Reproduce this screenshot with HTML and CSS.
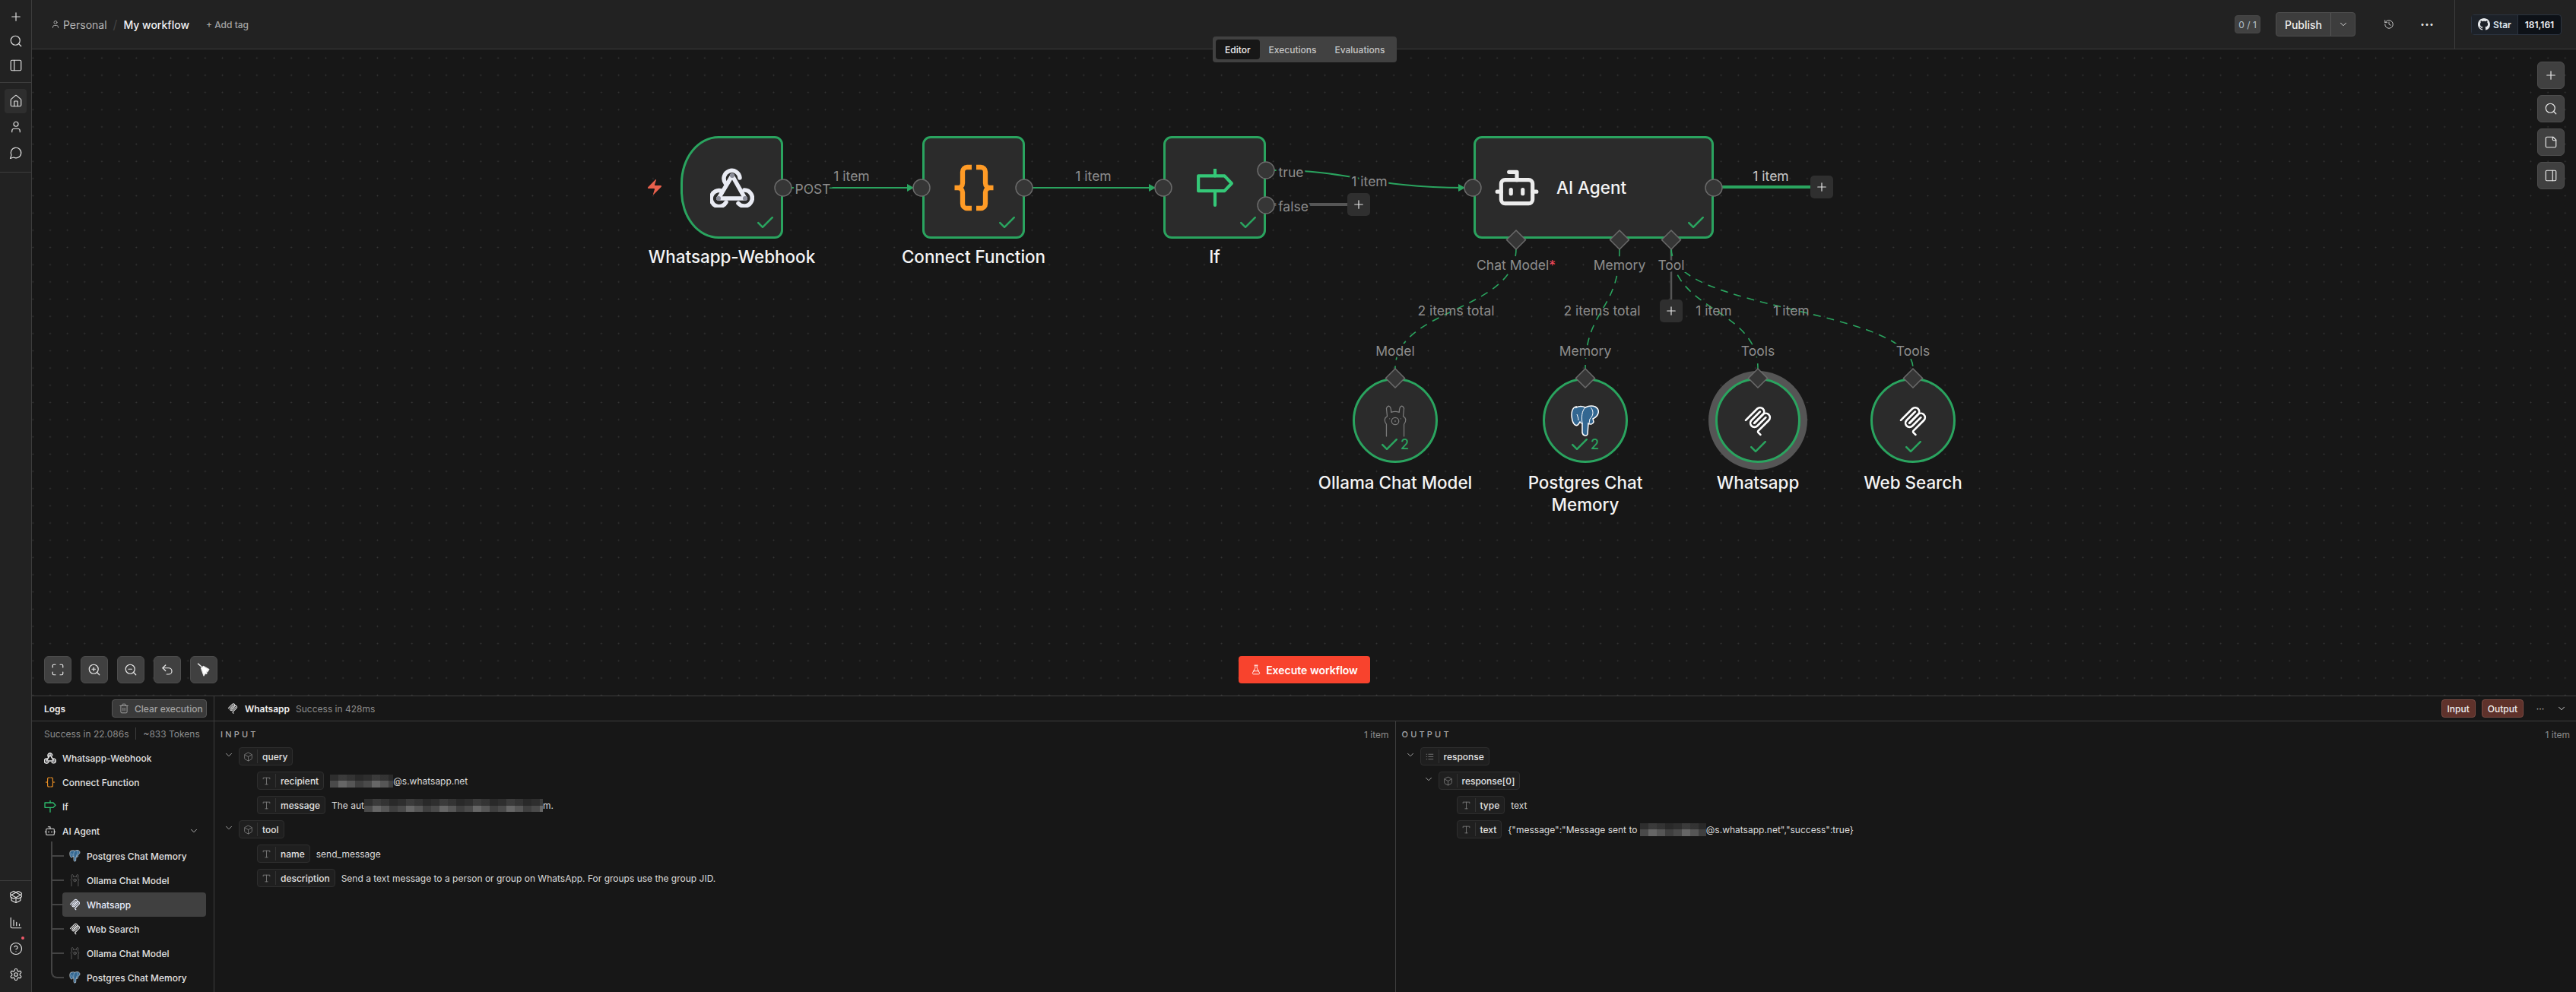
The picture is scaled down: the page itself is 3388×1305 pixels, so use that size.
FILE: index.html
```html
<!DOCTYPE html>
<html lang="en">
<head>
  <meta charset="UTF-8">
  <title>My workflow</title>
  <link rel="stylesheet" href="styles.css">
</head>
<body>
  <!-- icon sprite -->
  <svg class="sprite" xmlns="http://www.w3.org/2000/svg">
    <symbol id="i-plus" viewBox="0 0 24 24"><path d="M5 12h14M12 5v14"/></symbol>
    <symbol id="i-search" viewBox="0 0 24 24"><circle cx="11" cy="11" r="8"/><path d="m21 21-4.3-4.3"/></symbol>
    <symbol id="i-panel-left" viewBox="0 0 24 24"><rect x="3" y="3" width="18" height="18" rx="2"/><path d="M9 3v18"/></symbol>
    <symbol id="i-panel-right" viewBox="0 0 24 24"><rect x="3" y="3" width="18" height="18" rx="2"/><path d="M15 3v18"/></symbol>
    <symbol id="i-home" viewBox="0 0 24 24"><path d="M15 21v-8a1 1 0 0 0-1-1h-4a1 1 0 0 0-1 1v8"/><path d="M3 10a2 2 0 0 1 .7-1.5l7-6a2 2 0 0 1 2.6 0l7 6A2 2 0 0 1 21 10v9a2 2 0 0 1-2 2H5a2 2 0 0 1-2-2z"/></symbol>
    <symbol id="i-user" viewBox="0 0 24 24"><path d="M19 21v-2a4 4 0 0 0-4-4H9a4 4 0 0 0-4 4v2"/><circle cx="12" cy="7" r="4"/></symbol>
    <symbol id="i-chat" viewBox="0 0 24 24"><path d="M7.9 20A9 9 0 1 0 4 16.1L2 22Z"/></symbol>
    <symbol id="i-package" viewBox="0 0 24 24"><path d="M12 22v-9"/><path d="M15.17 2.21a1.67 1.67 0 0 1 1.63 0L21 4.57a1.93 1.93 0 0 1 0 3.36L8.82 14.79a1.66 1.66 0 0 1-1.64 0L3 12.43a1.93 1.93 0 0 1 0-3.36z"/><path d="M20 13v3.87a2.06 2.06 0 0 1-1.11 1.83l-6 3.08a1.93 1.93 0 0 1-1.78 0l-6-3.08A2.06 2.06 0 0 1 4 16.87V13"/><path d="M21 12.43a1.93 1.93 0 0 0 0-3.36L8.83 2.2a1.64 1.64 0 0 0-1.63 0L3 4.57a1.93 1.93 0 0 0 0 3.35l12.18 6.86a1.64 1.64 0 0 0 1.63 0z"/></symbol>
    <symbol id="i-chart" viewBox="0 0 24 24"><path d="M3 3v16a2 2 0 0 0 2 2h16"/><path d="M8 17V7M13 17v-6M18 17v-3"/></symbol>
    <symbol id="i-help" viewBox="0 0 24 24"><circle cx="12" cy="12" r="10"/><path d="M9.1 9a3 3 0 0 1 5.8 1c0 2-3 3-3 3M12 17h.01"/></symbol>
    <symbol id="i-gear" viewBox="0 0 24 24"><path d="M12.22 2h-.44a2 2 0 0 0-2 2v.18a2 2 0 0 1-1 1.73l-.43.25a2 2 0 0 1-2 0l-.15-.08a2 2 0 0 0-2.73.73l-.22.38a2 2 0 0 0 .73 2.73l.15.1a2 2 0 0 1 1 1.72v.51a2 2 0 0 1-1 1.74l-.15.09a2 2 0 0 0-.73 2.73l.22.38a2 2 0 0 0 2.73.73l.15-.08a2 2 0 0 1 2 0l.43.25a2 2 0 0 1 1 1.73V20a2 2 0 0 0 2 2h.44a2 2 0 0 0 2-2v-.18a2 2 0 0 1 1-1.73l.43-.25a2 2 0 0 1 2 0l.15.08a2 2 0 0 0 2.73-.73l.22-.39a2 2 0 0 0-.73-2.73l-.15-.08a2 2 0 0 1-1-1.74v-.5a2 2 0 0 1 1-1.74l.15-.09a2 2 0 0 0 .73-2.73l-.22-.38a2 2 0 0 0-2.73-.73l-.15.08a2 2 0 0 1-2 0l-.43-.25a2 2 0 0 1-1-1.73V4a2 2 0 0 0-2-2z"/><circle cx="12" cy="12" r="3"/></symbol>
    <symbol id="i-chevron" viewBox="0 0 24 24"><path d="m6 9 6 6 6-6"/></symbol>
    <symbol id="i-history" viewBox="0 0 24 24"><path d="M3 12a9 9 0 1 0 9-9 9.75 9.75 0 0 0-6.74 2.74L3 8"/><path d="M3 3v5h5M12 7v5l4 2"/></symbol>
    <symbol id="i-note" viewBox="0 0 24 24"><path d="M16 3H5a2 2 0 0 0-2 2v14a2 2 0 0 0 2 2h14a2 2 0 0 0 2-2V8Z"/><path d="M15 3v4a2 2 0 0 0 2 2h4"/></symbol>
    <symbol id="i-fit" viewBox="0 0 24 24"><path d="M8 3H5a2 2 0 0 0-2 2v3M21 8V5a2 2 0 0 0-2-2h-3M3 16v3a2 2 0 0 0 2 2h3M16 21h3a2 2 0 0 0 2-2v-3"/></symbol>
    <symbol id="i-zoom-in" viewBox="0 0 24 24"><circle cx="11" cy="11" r="8"/><path d="m21 21-4.3-4.3M11 8v6M8 11h6"/></symbol>
    <symbol id="i-zoom-out" viewBox="0 0 24 24"><circle cx="11" cy="11" r="8"/><path d="m21 21-4.3-4.3M8 11h6"/></symbol>
    <symbol id="i-undo" viewBox="0 0 24 24"><path d="M9 14 4 9l5-5"/><path d="M4 9h10.5a5.5 5.5 0 0 1 0 11H11"/></symbol>
    <symbol id="i-trash" viewBox="0 0 24 24"><path d="M3 6h18M19 6v14a2 2 0 0 1-2 2H7a2 2 0 0 1-2-2V6M8 6V4a2 2 0 0 1 2-2h4a2 2 0 0 1 2 2v2M10 11v6M14 11v6"/></symbol>
    <symbol id="i-cube" viewBox="0 0 24 24"><path d="M21 8a2 2 0 0 0-1-1.73l-7-4a2 2 0 0 0-2 0l-7 4A2 2 0 0 0 3 8v8a2 2 0 0 0 1 1.73l7 4a2 2 0 0 0 2 0l7-4A2 2 0 0 0 21 16Z"/><path d="m3.3 7 8.7 5 8.7-5M12 22V12"/></symbol>
    <symbol id="i-type" viewBox="0 0 24 24"><path d="M4 7V4h16v3M9 20h6M12 4v16"/></symbol>
    <symbol id="i-list" viewBox="0 0 24 24"><path d="M9 6h11M9 12h11M9 18h11M4 6h1M4 12h1M4 18h1"/></symbol>
    <symbol id="i-check" viewBox="3 5 18 13"><path d="M20 6 9 17l-5-5"/></symbol>
    <symbol id="i-webhook" viewBox="0 0 58 53">
      <path d="M20 21A10.500 10.500 0 1 1 39 14M29 11 46 41"/>
      <path d="M45 30A10.500 10.500 0 1 1 37 47.500M46 41H11"/>
      <path d="M21 46A10.500 10.500 0 1 1 14.500 31M11 41 29 11"/>
      <circle cx="29" cy="11" r="3" fill="#8b8d99" stroke="none"/>
      <circle cx="46" cy="41" r="3" fill="#8b8d99" stroke="none"/>
      <circle cx="11" cy="41" r="3" fill="#8b8d99" stroke="none"/>
    </symbol>
    <symbol id="i-braces" viewBox="0 0 24 24"><path d="M11 3H9a2 2 0 0 0-2 2v5a2 2 0 0 1-2 2H3.500M5 12a2 2 0 0 1 2 2v5a2 2 0 0 0 2 2h2"/><path d="M13 3h2a2 2 0 0 1 2 2v5a2 2 0 0 0 2 2h1.500M19 12a2 2 0 0 0-2 2v5a2 2 0 0 1-2 2h-2"/></symbol>
    <symbol id="i-sign" viewBox="0 0 48 48"><path d="M24 1v8M24 28v18"/><path d="M3 9h33l9 9.5-9 9.5H3z"/></symbol>
    <symbol id="i-bot" viewBox="0 0 24 24"><path d="M12 8V4H8"/><rect x="4" y="8" width="16" height="12" rx="2"/><path d="M2 14h2M20 14h2M15 13v2M9 13v2"/></symbol>
    <symbol id="i-mcp" viewBox="0 0 180 180"><path d="M18 84.85 85.88 16.97c9.37-9.37 24.57-9.37 33.94 0 9.37 9.37 9.37 24.57 0 33.94l-51.26 51.27"/><path d="M69.27 101.47 119.82 50.91c9.37-9.37 24.57-9.37 33.94 0l.35.35c9.37 9.37 9.37 24.57 0 33.94L92.72 146.6c-3.12 3.12-3.12 8.19 0 11.31l12.61 12.61"/><path d="M102.85 33.94 52.65 84.15c-9.37 9.37-9.37 24.56 0 33.94 9.37 9.37 24.57 9.37 33.94 0l50.2-50.21"/></symbol>
    <symbol id="i-llama" viewBox="0 0 30 40"><path d="M4 39V24C1 20 1 16 5 14L4 4Q5 1 7 1 10 2 10 9 15 7 20 9 20 2 23 1 25 1 26 4L25 14C29 16 29 20 26 24V39"/><circle cx="15" cy="20" r="4.500"/><path d="M15 19.500v1M8 17h.01M22 17h.01"/></symbol>
    <symbol id="i-postgres" viewBox="0 0 40 42"><path class="pg-body" d="M8 2C2 3 1 12 3 20c2 7 6 8 8 5l2-3c1 2 3 2 3 2v12c1 5 6 5 7 2l1-14c3 2 6 1 7-2l-1-4c8-4 10-12 3-16-5-2-9-1-13 1-4-2-8-2-12 0Z"/><path class="pg-line" d="M20 3c-5 5-5 13-4 21M27 3c5 5 3 12-1 15l-1 6M9 12c1 3 2 5 2 8M29 11h.01"/></symbol>
    <symbol id="i-github" viewBox="0 0 16 16"><path d="M8 0C3.58 0 0 3.58 0 8c0 3.54 2.29 6.53 5.47 7.59.4.07.55-.17.55-.38 0-.19-.01-.82-.01-1.49-2.01.37-2.53-.49-2.69-.94-.09-.23-.48-.94-.82-1.13-.28-.15-.68-.52-.01-.53.63-.01 1.08.58 1.23.82.72 1.21 1.87.87 2.33.66.07-.52.28-.87.51-1.07-1.78-.2-3.64-.89-3.64-3.95 0-.87.31-1.59.82-2.15-.08-.2-.36-1.02.08-2.12 0 0 .67-.21 2.2.82.64-.18 1.32-.27 2-.27.68 0 1.36.09 2 .27 1.53-1.04 2.2-.82 2.2-.82.44 1.1.16 1.92.08 2.12.51.56.82 1.27.82 2.15 0 3.07-1.87 3.75-3.65 3.95.29.25.54.73.54 1.48 0 1.07-.01 1.93-.01 2.2 0 .21.15.46.55.38A8.01 8.01 0 0 0 16 8c0-4.42-3.58-8-8-8z"/></symbol>
    <symbol id="i-broom" viewBox="0 0 24 24"><path d="M2 1.500 9.500 8"/><path d="M7.500 9.500 11.500 6 21 11.500 18.500 15.500 17 15v4l-2.500-.5L12 22.500Z"/></symbol>
    <symbol id="i-zap" viewBox="0 0 24 24"><path d="M4 14a1 1 0 0 1-.78-1.63l9.9-10.2a.5.5 0 0 1 .86.46l-1.92 6.02A1 1 0 0 0 13 10h7a1 1 0 0 1 .78 1.63l-9.9 10.2a.5.5 0 0 1-.86-.46l1.92-6.02A1 1 0 0 0 11 14z"/></symbol>
    <symbol id="i-flask" viewBox="0 0 24 24"><path d="M14 2v6a2 2 0 0 0 .25.96l5.5 10.08A2 2 0 0 1 18 22H6a2 2 0 0 1-1.75-2.96l5.5-10.08A2 2 0 0 0 10 8V2M6.45 15h11.1M8.5 2h7"/></symbol>
  </svg>

  <div class="app">
    <aside class="sidebar">
      <div class="side-group side-top">
        <span class="side-item"><svg class="icon"><use href="#i-plus"/></svg></span>
        <span class="side-item"><svg class="icon"><use href="#i-search"/></svg></span>
        <span class="side-item"><svg class="icon"><use href="#i-panel-left"/></svg></span>
      </div>
      <div class="side-group side-nav">
        <span class="side-item active"><svg class="icon"><use href="#i-home"/></svg></span>
        <span class="side-item"><svg class="icon"><use href="#i-user"/></svg></span>
        <span class="side-item"><svg class="icon"><use href="#i-chat"/></svg></span>
      </div>
      <div class="side-group side-bottom">
        <span class="side-item"><svg class="icon"><use href="#i-package"/></svg></span>
        <span class="side-item"><svg class="icon"><use href="#i-chart"/></svg></span>
        <span class="side-item has-dot"><svg class="icon"><use href="#i-help"/></svg></span>
        <span class="side-item"><svg class="icon"><use href="#i-gear"/></svg></span>
      </div>
    </aside>

    <main class="main">
      <header class="topbar">
        <div class="crumbs">
          <svg class="icon crumb-icon"><use href="#i-user"/></svg>
          <span class="crumb-project">Personal</span>
          <span class="crumb-sep">/</span>
          <span class="crumb-name">My workflow</span>
          <span class="add-tag">+ Add tag</span>
        </div>
        <div class="top-actions">
          <span class="chip">0 / 1</span>
          <div class="publish">
            <span class="publish-label">Publish</span>
            <span class="publish-more"><svg class="icon small"><use href="#i-chevron"/></svg></span>
          </div>
          <svg class="icon history"><use href="#i-history"/></svg>
          <span class="dots">···</span>
          <div class="github-wrap">
            <div class="github">
              <span class="github-star"><svg class="github-mark"><use href="#i-github"/></svg>Star</span>
              <span class="github-count">181,161</span>
            </div>
          </div>
        </div>
      </header>

      <section class="canvas">
        <nav class="tabs">
          <span class="tab active">Editor</span>
          <span class="tab">Executions</span>
          <span class="tab">Evaluations</span>
        </nav>

        <div class="diagram">
          <div class="node node-webhook">
            <div class="node-box trigger">
              <svg class="icon icon-webhook"><use href="#i-webhook"/></svg>
              <svg class="icon node-check"><use href="#i-check"/></svg>
            </div>
            <div class="node-label">Whatsapp-Webhook</div>
          </div>
          <svg class="bolt"><use href="#i-zap"/></svg>

          <div class="node node-code">
            <div class="node-box">
              <svg class="icon icon-braces"><use href="#i-braces"/></svg>
              <svg class="icon node-check"><use href="#i-check"/></svg>
            </div>
            <div class="node-label">Connect Function</div>
          </div>

          <div class="node node-if">
            <div class="node-box">
              <svg class="icon icon-sign"><use href="#i-sign"/></svg>
              <svg class="icon node-check"><use href="#i-check"/></svg>
            </div>
            <div class="node-label">If</div>
          </div>

          <div class="node node-agent">
            <div class="node-box agent">
              <svg class="icon icon-bot"><use href="#i-bot"/></svg>
              <span class="agent-name">AI Agent</span>
              <svg class="icon node-check"><use href="#i-check"/></svg>
            </div>
          </div>

          <div class="subnode sub-ollama">
            <div class="sub-box">
              <svg class="icon icon-llama"><use href="#i-llama"/></svg>
              <div class="sub-status"><svg class="icon"><use href="#i-check"/></svg><span>2</span></div>
            </div>
            <div class="node-label">Ollama Chat Model</div>
          </div>
          <div class="subnode sub-postgres">
            <div class="sub-box">
              <svg class="icon-pg"><use href="#i-postgres"/></svg>
              <div class="sub-status"><svg class="icon"><use href="#i-check"/></svg><span>2</span></div>
            </div>
            <div class="node-label wrap">Postgres Chat Memory</div>
          </div>
          <div class="subnode sub-whatsapp">
            <div class="sub-box selected">
              <svg class="icon icon-mcp"><use href="#i-mcp"/></svg>
              <div class="sub-status"><svg class="icon"><use href="#i-check"/></svg></div>
            </div>
            <div class="node-label">Whatsapp</div>
          </div>
          <div class="subnode sub-search">
            <div class="sub-box">
              <svg class="icon icon-mcp"><use href="#i-mcp"/></svg>
              <div class="sub-status"><svg class="icon"><use href="#i-check"/></svg></div>
            </div>
            <div class="node-label">Web Search</div>
          </div>

          <!-- edges, ports and their labels, in page coordinates -->
          <svg class="edges" viewBox="0 0 3388 915">
            <g class="edge">
              <path d="M1041 247H1202"/>
              <path d="M1358 247H1520"/>
              <path d="M1676 224C1780 224 1800 247 1927 247"/>
            </g>
            <path class="edge-thick" d="M2265 246H2382"/>
            <path class="edge-idle" d="M1676 269H1773"/>
            <path class="edge-idle thin" d="M2198 327V395"/>
            <g class="edge-dashed">
              <path d="M1994 327C1994 410 1835 405 1835 485"/>
              <path d="M2130 327C2130 410 2085 405 2085 485"/>
              <path d="M2198 327C2198 410 2312 405 2312 485"/>
              <path d="M2198 327C2198 410 2516 405 2516 485"/>
            </g>
            <g class="arrow">
              <path d="M1193 242l9 5-9 5z"/>
              <path d="M1511 242l9 5-9 5z"/>
              <path d="M1918 242l9 5-9 5z"/>
            </g>
            <g class="port">
              <circle cx="1030" cy="247" r="11"/>
              <circle cx="1212" cy="247" r="11"/>
              <circle cx="1347" cy="247" r="11"/>
              <circle cx="1530" cy="247" r="11"/>
              <circle cx="1665" cy="224" r="11"/>
              <circle cx="1665" cy="270" r="11"/>
              <circle cx="1937" cy="247" r="11"/>
              <circle cx="2254" cy="247" r="11"/>
              <path d="M1994 303l12.500 12.500-12.500 12.500-12.500-12.500z"/>
              <path d="M2130 303l12.500 12.500-12.500 12.500-12.500-12.500z"/>
              <path d="M2198 303l12.500 12.500-12.500 12.500-12.500-12.500z"/>
              <path d="M1835 485l12.500 12.500-12.500 12.500-12.500-12.500z"/>
              <path d="M2085 485l12.500 12.500-12.500 12.500-12.500-12.500z"/>
              <path d="M2312 485l12.500 12.500-12.500 12.500-12.500-12.500z"/>
              <path d="M2516 485l12.500 12.500-12.500 12.500-12.500-12.500z"/>
            </g>
            <g class="edge-text masked">
              <text x="1069" y="248">POST</text>
              <text x="1698" y="226">true</text>
              <text x="1701" y="271">false</text>
              <text x="1801" y="238">1 item</text>
              <text x="1994" y="348">Chat Model<tspan class="required">*</tspan></text>
              <text x="2130" y="348">Memory</text>
              <text x="2198" y="348">Tool</text>
              <text x="1835" y="461">Model</text>
              <text x="2085" y="461">Memory</text>
              <text x="2312" y="461">Tools</text>
              <text x="2516" y="461">Tools</text>
            </g>
            <g class="edge-text">
              <text x="1120" y="231">1 item</text>
              <text x="1438" y="231">1 item</text>
              <text class="bright" x="2329" y="231">1 item</text>
              <text x="1915" y="408">2 items total</text>
              <text x="2107" y="408">2 items total</text>
              <text x="2254" y="408">1 item</text>
              <text x="2356" y="408">1 item</text>
            </g>
          </svg>

          <span class="add-node add-false"><svg class="icon"><use href="#i-plus"/></svg></span>
          <span class="add-node add-agent"><svg class="icon"><use href="#i-plus"/></svg></span>
          <span class="add-node add-tool"><svg class="icon"><use href="#i-plus"/></svg></span>
        </div>

        <div class="tools tools-right">
          <span class="tool-btn"><svg class="icon"><use href="#i-plus"/></svg></span>
          <span class="tool-btn"><svg class="icon"><use href="#i-search"/></svg></span>
          <span class="tool-btn"><svg class="icon"><use href="#i-note"/></svg></span>
          <span class="tool-btn"><svg class="icon"><use href="#i-panel-right"/></svg></span>
        </div>
        <div class="tools tools-left">
          <span class="tool-btn"><svg class="icon"><use href="#i-fit"/></svg></span>
          <span class="tool-btn"><svg class="icon"><use href="#i-zoom-in"/></svg></span>
          <span class="tool-btn"><svg class="icon"><use href="#i-zoom-out"/></svg></span>
          <span class="tool-btn"><svg class="icon"><use href="#i-undo"/></svg></span>
          <span class="tool-btn"><svg class="icon broom"><use href="#i-broom"/></svg></span>
        </div>
        <button class="execute"><svg class="icon"><use href="#i-flask"/></svg>Execute workflow</button>
      </section>

      <section class="logs">
        <div class="logs-left">
          <div class="logs-head">
            <span class="logs-title">Logs</span>
            <span class="clear-btn"><svg class="icon"><use href="#i-trash"/></svg>Clear execution</span>
          </div>
          <div class="logs-summary">
            <span>Success in 22.086s</span>
            <span class="summary-sep"></span>
            <span>~833 Tokens</span>
          </div>
          <ul class="log-list">
            <li class="log-row"><svg class="icon log-icon mark"><use href="#i-webhook"/></svg>Whatsapp-Webhook</li>
            <li class="log-row"><svg class="icon log-icon orange"><use href="#i-braces"/></svg>Connect Function</li>
            <li class="log-row"><svg class="icon log-icon green"><use href="#i-sign"/></svg>If</li>
            <li class="log-row"><svg class="icon log-icon"><use href="#i-bot"/></svg>AI Agent<svg class="icon log-chevron"><use href="#i-chevron"/></svg></li>
          </ul>
          <ul class="log-list log-sub">
            <li class="log-row"><svg class="log-icon sub"><use href="#i-postgres"/></svg>Postgres Chat Memory</li>
            <li class="log-row"><svg class="icon log-icon sub dim"><use href="#i-llama"/></svg>Ollama Chat Model</li>
            <li class="log-row selected"><svg class="icon log-icon sub mcp"><use href="#i-mcp"/></svg>Whatsapp</li>
            <li class="log-row"><svg class="icon log-icon sub mcp"><use href="#i-mcp"/></svg>Web Search</li>
            <li class="log-row"><svg class="icon log-icon sub dim"><use href="#i-llama"/></svg>Ollama Chat Model</li>
            <li class="log-row"><svg class="log-icon sub"><use href="#i-postgres"/></svg>Postgres Chat Memory</li>
          </ul>
        </div>

        <div class="logs-detail">
          <div class="detail-head">
            <svg class="icon detail-icon"><use href="#i-mcp"/></svg>
            <span class="detail-name">Whatsapp</span>
            <span class="detail-status">Success in 428ms</span>
            <div class="detail-actions">
              <span class="toggle">Input</span>
              <span class="toggle">Output</span>
              <span class="detail-dots">···</span>
              <svg class="icon detail-chevron"><use href="#i-chevron"/></svg>
            </div>
          </div>
          <div class="panels">
            <div class="panel panel-input">
              <div class="panel-head"><span class="panel-title">INPUT</span><span class="panel-count">1 item</span></div>
              <div class="schema">
                <div class="schema-row">
                  <svg class="icon schema-chevron"><use href="#i-chevron"/></svg>
                  <span class="pill"><span class="pill-icon"><svg class="icon"><use href="#i-cube"/></svg></span><span class="pill-text">query</span></span>
                </div>
                <div class="schema-row leaf depth-1">
                  <span class="pill"><span class="pill-icon"><svg class="icon"><use href="#i-type"/></svg></span><span class="pill-text">recipient</span></span>
                  <span class="value"><span class="blur blur-a"></span>@s.whatsapp.net</span>
                </div>
                <div class="schema-row leaf depth-1">
                  <span class="pill"><span class="pill-icon"><svg class="icon"><use href="#i-type"/></svg></span><span class="pill-text">message</span></span>
                  <span class="value">The aut<span class="blur blur-b"></span>m.</span>
                </div>
                <div class="schema-row">
                  <svg class="icon schema-chevron"><use href="#i-chevron"/></svg>
                  <span class="pill"><span class="pill-icon"><svg class="icon"><use href="#i-cube"/></svg></span><span class="pill-text">tool</span></span>
                </div>
                <div class="schema-row leaf depth-1">
                  <span class="pill"><span class="pill-icon"><svg class="icon"><use href="#i-type"/></svg></span><span class="pill-text">name</span></span>
                  <span class="value">send_message</span>
                </div>
                <div class="schema-row leaf depth-1">
                  <span class="pill"><span class="pill-icon"><svg class="icon"><use href="#i-type"/></svg></span><span class="pill-text">description</span></span>
                  <span class="value">Send a text message to a person or group on WhatsApp. For groups use the group JID.</span>
                </div>
              </div>
            </div>
            <div class="panel">
              <div class="panel-head"><span class="panel-title">OUTPUT</span><span class="panel-count">1 item</span></div>
              <div class="schema">
                <div class="schema-row">
                  <svg class="icon schema-chevron"><use href="#i-chevron"/></svg>
                  <span class="pill"><span class="pill-icon"><svg class="icon"><use href="#i-list"/></svg></span><span class="pill-text">response</span></span>
                </div>
                <div class="schema-row depth-1">
                  <svg class="icon schema-chevron"><use href="#i-chevron"/></svg>
                  <span class="pill"><span class="pill-icon"><svg class="icon"><use href="#i-cube"/></svg></span><span class="pill-text">response[0]</span></span>
                </div>
                <div class="schema-row leaf depth-2">
                  <span class="pill"><span class="pill-icon"><svg class="icon"><use href="#i-type"/></svg></span><span class="pill-text">type</span></span>
                  <span class="value">text</span>
                </div>
                <div class="schema-row leaf depth-2">
                  <span class="pill"><span class="pill-icon"><svg class="icon"><use href="#i-type"/></svg></span><span class="pill-text">text</span></span>
                  <span class="value">{"message":"Message sent to <span class="blur blur-c"></span>@s.whatsapp.net","success":true}</span>
                </div>
              </div>
            </div>
          </div>
        </div>
      </section>
    </main>
  </div>
</body>
</html>
```

FILE: styles.css
```css
* {
  box-sizing: border-box;
}

html, body {
  height: 100%;
  margin: 0;
}

body {
  font-family: 'Inter', 'Liberation Sans', sans-serif;
  font-size: 12px;
  color: #e6e6e6;
  background: #171717;
  overflow: hidden;
}

ul {
  list-style: none;
  margin: 0;
  padding: 0;
}

.sprite {
  position: absolute;
  width: 0;
  height: 0;
}

.icon {
  width: 18px;
  height: 18px;
  fill: none;
  stroke: currentColor;
  stroke-width: 1.6;
  stroke-linecap: round;
  stroke-linejoin: round;
  flex: none;
}

.icon.small {
  width: 14px;
  height: 14px;
}

.app {
  display: flex;
  height: 100vh;
}

/* left rail */
.sidebar {
  width: 42px;
  flex: none;
  display: flex;
  flex-direction: column;
  background: #222;
  border-right: 1px solid #3d3d3d;
  color: #ddd;
}

.side-group {
  display: flex;
  flex-direction: column;
  align-items: center;
  gap: 2px;
}

.side-top {
  gap: 0;
  padding: 6px 0 6px;
  border-bottom: 1px solid #3d3d3d;
  height: 109px;
}

.side-nav {
  padding-top: 8px;
  height: 118px;
  border-bottom: 1px solid #3d3d3d;
}

.side-bottom {
  margin-top: auto;
  padding: 5px 0 7px;
  border-top: 1px solid #3d3d3d;
}

.side-item {
  width: 29px;
  height: 32px;
  display: flex;
  align-items: center;
  justify-content: center;
  border-radius: 4px;
  position: relative;
}

.side-item.active {
  background: #2e2e2e;
}

.has-dot::after {
  content: '';
  position: absolute;
  top: 0;
  right: 3px;
  width: 4px;
  height: 4px;
  border-radius: 50%;
  background: #f0596a;
}

.main {
  flex: 1;
  min-width: 0;
  display: flex;
  flex-direction: column;
}

/* top bar */
.topbar {
  height: 65px;
  flex: none;
  display: flex;
  align-items: center;
  background: #222;
  border-bottom: 1px solid #3d3d3d;
}

.crumbs {
  display: flex;
  align-items: center;
  padding-left: 25px;
}

.crumb-icon {
  width: 12px;
  height: 12px;
  color: #bbb;
  margin-right: 4px;
}

.crumb-project {
  font-size: 14px;
  color: #b5b5b5;
}

.crumb-sep {
  margin: 0 8px;
  font-size: 16px;
  color: #444;
}

.crumb-name {
  font-size: 14px;
  font-weight: 500;
  color: #f2f2f2;
}

.add-tag {
  margin-left: 22px;
  font-weight: 500;
  color: #a5a5a5;
}

.top-actions {
  margin-left: auto;
  height: 100%;
  display: flex;
  align-items: center;
}

.chip {
  width: 34px;
  height: 24px;
  display: flex;
  align-items: center;
  justify-content: center;
  border-radius: 4px;
  background: #414141;
  color: #b5c2cc;
  border: 1px solid #484848;
}

.publish {
  margin-left: 20px;
  height: 32px;
  width: 105px;
  display: flex;
  border: 1px solid #4d4d4d;
  border-radius: 4px;
  background: #3d3d3d;
}

.publish-label {
  flex: 1;
  display: flex;
  align-items: center;
  justify-content: center;
  font-size: 14px;
  font-weight: 500;
  color: #eee;
  border-right: 1px solid #555;
}

.publish-more {
  width: 31px;
  display: flex;
  align-items: center;
  justify-content: center;
  color: #ddd;
}

.history {
  width: 14px;
  height: 14px;
  margin-left: 37px;
  color: #ccc;
}

.dots {
  margin-left: 27px;
  width: 32px;
  text-align: center;
  font-size: 18px;
  font-weight: 700;
  color: #ddd;
}

.github-wrap {
  margin-left: 20px;
  height: 100%;
  padding-left: 21px;
  padding-right: 19px;
  border-left: 1px solid #3d3d3d;
  display: flex;
  align-items: center;
}

.github {
  height: 27px;
  width: 119px;
  display: flex;
  border: 1px solid #2b3340;
  border-radius: 4px;
  background: #0d1117;
  font-size: 12px;
  font-weight: 600;
}

.github-star {
  width: 61px;
  display: flex;
  align-items: center;
  justify-content: center;
  gap: 4px;
  background: #1c2128;
  border-right: 1px solid #2b3340;
  color: #dfe5ea;
}

.github-mark {
  width: 16px;
  height: 16px;
  fill: #e6e9ec;
}

.github-count {
  flex: 1;
  display: flex;
  align-items: center;
  justify-content: center;
  color: #eef2f6;
}

/* canvas */
.canvas {
  flex: 1;
  min-height: 0;
  position: relative;
  background-color: #171717;
  background-image: radial-gradient(circle, #383838 0.8px, transparent 1.1px);
  background-size: 22.67px 22.67px;
  background-position: -10px 0;
}

.tabs {
  position: absolute;
  left: 1553px;
  top: -17px;
  height: 34px;
  padding: 4px;
  display: flex;
  border-radius: 4px;
  background: #414141;
  z-index: 2;
}

.tab {
  padding: 0 12px;
  display: flex;
  align-items: center;
  font-weight: 500;
  color: #c4c4c4;
  border-radius: 4px;
}

.tab.active {
  background: #171717;
  color: #f2f2f2;
}

/* the diagram uses page coordinates */
.diagram {
  position: absolute;
  left: -42px;
  top: -65px;
  width: 3388px;
  height: 915px;
}

.edges {
  position: absolute;
  left: 0;
  top: 0;
  width: 3388px;
  height: 915px;
  pointer-events: none;
}

.edge path {
  fill: none;
  stroke: #2aa45f;
  stroke-width: 2;
}

.edge-thick {
  fill: none;
  stroke: #2aa45f;
  stroke-width: 4;
}

.edge-idle {
  fill: none;
  stroke: #565656;
  stroke-width: 4;
}

.edge-idle.thin {
  stroke-width: 2.500;
}

.edge-dashed path {
  fill: none;
  stroke: #2aa45f;
  stroke-width: 1.600;
  stroke-dasharray: 10 8;
}

.arrow path {
  fill: #2aa45f;
}

.port circle,
.port path {
  fill: #363636;
  stroke: #6a6a6a;
  stroke-width: 1.500;
}

.edge-text text {
  font-family: 'Inter', sans-serif;
  font-size: 17.500px;
  fill: #8d8d8d;
  text-anchor: middle;
  dominant-baseline: central;
}

.edge-text.masked text {
  stroke: #171717;
  stroke-width: 6px;
  paint-order: stroke;
}

.edge-text .bright {
  fill: #c9c9c9;
}

.edge-text.masked .required {
  fill: #f0485a;
  stroke: none;
}

.node {
  position: absolute;
  top: 179px;
  display: flex;
  flex-direction: column;
  align-items: center;
  gap: 9px;
  width: 135px;
}

.node-webhook { left: 895px; }
.node-code { left: 1213px; }
.node-if { left: 1530px; }
.node-agent { left: 1938px; width: 316px; }

.node-box {
  position: relative;
  width: 100%;
  height: 135px;
  flex: none;
  display: flex;
  align-items: center;
  justify-content: center;
  background: #2b2b2b;
  border: 3px solid #2aa45f;
  border-radius: 11px;
}

.node-box.trigger {
  border-radius: 50px 11px 11px 50px / 62px 11px 11px 62px;
}

.node-box.agent {
  justify-content: flex-start;
  padding-left: 23px;
  gap: 21px;
}

.node-check {
  position: absolute;
  right: 10px;
  bottom: 11px;
  width: 21px;
  height: 15px;
  color: #2aa45f;
  stroke-width: 2.200;
}

.node-label {
  font-size: 22.400px;
  font-weight: 500;
  line-height: 29px;
  color: #f4f4f4;
  white-space: nowrap;
  text-align: center;
}

.node-label.wrap {
  white-space: normal;
  width: 170px;
}

.icon-webhook {
  width: 58px;
  height: 53px;
  color: #e9ebf3;
  stroke-width: 5.500;
}

.icon-braces {
  width: 72px;
  height: 72px;
  color: #ff9b26;
  stroke-width: 2.100;
  stroke-linecap: butt;
}

.icon-sign {
  width: 50px;
  height: 50px;
  color: #35c878;
  stroke-width: 4;
}

.icon-bot {
  width: 62px;
  height: 62px;
  color: #ececec;
  stroke-width: 2;
}

.agent-name {
  font-size: 22.500px;
  font-weight: 500;
  color: #f4f4f4;
}

.bolt {
  position: absolute;
  left: 849px;
  top: 234px;
  width: 24px;
  height: 24px;
  fill: #e8604c;
}

.subnode {
  position: absolute;
  top: 497px;
  width: 112px;
  display: flex;
  flex-direction: column;
  align-items: center;
  gap: 11px;
}

.sub-ollama { left: 1779px; }
.sub-postgres { left: 2029px; }
.sub-whatsapp { left: 2256px; }
.sub-search { left: 2460px; }

.sub-box {
  position: relative;
  width: 112px;
  height: 112px;
  flex: none;
  display: flex;
  align-items: center;
  justify-content: center;
  border-radius: 50%;
  background: #2b2b2b;
  border: 3px solid #2aa45f;
}

.sub-box.selected {
  box-shadow: 0 0 0 9px #555;
}

.sub-status {
  position: absolute;
  left: 0;
  right: 0;
  bottom: 11px;
  display: flex;
  align-items: center;
  justify-content: center;
  gap: 4px;
  color: #2aa45f;
  font-size: 18px;
  font-weight: 500;
}

.sub-status .icon {
  width: 21px;
  height: 15px;
  stroke-width: 2.200;
}

.icon-llama {
  width: 32px;
  height: 42px;
  color: #7b7b7b;
  stroke-width: 1.200;
  margin-top: 2px;
}

.icon-pg {
  width: 40px;
  height: 42px;
  margin-top: 2px;
}

.pg-body {
  fill: #336791;
  stroke: #fff;
  stroke-width: 1.500;
}

.pg-line {
  fill: none;
  stroke: #fff;
  stroke-width: 1;
}

.icon-mcp {
  width: 40px;
  height: 40px;
  color: #fff;
  stroke-width: 12;
  margin-top: 2px;
}

.add-node {
  position: absolute;
  width: 30px;
  height: 30px;
  display: flex;
  align-items: center;
  justify-content: center;
  border-radius: 5px;
  background: #2f2f2f;
  color: #e6e6e6;
}

.add-false { left: 1772px; top: 254px; }
.add-agent { left: 2381px; top: 231px; }
.add-tool { left: 2183px; top: 394px; }

.tools {
  position: absolute;
  display: flex;
}

.tools-right {
  right: 15px;
  top: 16px;
  flex-direction: column;
  gap: 8px;
}

.tools-left {
  left: 16px;
  bottom: 16px;
  gap: 12px;
}

.tool-btn {
  width: 36px;
  height: 36px;
  display: flex;
  align-items: center;
  justify-content: center;
  border-radius: 6px;
  background: #404040;
  border: 1px solid #4d4d4d;
  color: #e8e8e8;
}

.icon.broom {
  fill: #fff;
  stroke-width: 1.800;
}

.execute {
  position: absolute;
  left: 1587px;
  bottom: 16px;
  width: 173px;
  height: 36px;
  display: flex;
  align-items: center;
  justify-content: center;
  gap: 6px;
  border: none;
  border-radius: 4px;
  background: #f8432d;
  color: #fff;
  font: 600 14px 'Inter', sans-serif;
}

.execute .icon {
  width: 14px;
  height: 14px;
}

/* logs */
.logs {
  height: 390px;
  flex: none;
  display: flex;
  background: #171717;
  border-top: 1px solid #3d3d3d;
}

.logs-left {
  width: 240px;
  flex: none;
  border-right: 1px solid #3d3d3d;
}

.logs-head {
  height: 33px;
  display: flex;
  align-items: center;
  justify-content: space-between;
  padding: 0 9px 0 16px;
  border-bottom: 1px solid #3d3d3d;
}

.logs-title {
  font-weight: 600;
  color: #eee;
}

.clear-btn {
  width: 125px;
  height: 24px;
  display: flex;
  align-items: center;
  gap: 7px;
  padding-left: 8px;
  border: 1px solid #555;
  border-radius: 4px;
  background: #3a3a3a;
  color: #a3a3a3;
  font-weight: 500;
}

.clear-btn .icon {
  width: 14px;
  height: 14px;
}

.logs-summary {
  height: 32px;
  display: flex;
  align-items: center;
  gap: 9px;
  padding-left: 16px;
  color: #8c8c8c;
}

.summary-sep {
  width: 1px;
  height: 16px;
  background: #3d3d3d;
}

.log-row {
  height: 32px;
  display: flex;
  align-items: center;
  padding-left: 16px;
  font-weight: 500;
  color: #e2e2e2;
  position: relative;
}

.log-icon {
  width: 16px;
  height: 16px;
  margin-right: 8px;
}

.log-icon.mark { stroke-width: 6; }
.log-icon.orange { color: #ff9b26; }
.log-icon.green { color: #2ebc6d; stroke-width: 4; }
.log-icon.dim { color: #7b7b7b; }

.log-chevron {
  width: 14px;
  height: 14px;
  margin-left: auto;
  margin-right: 19px;
  color: #bbb;
}

.log-sub {
  margin-top: 1px;
}

.log-sub .log-row {
  margin-left: 40px;
  margin-right: 10px;
  padding-left: 9px;
  border-radius: 4px;
}

.log-sub .log-row::before {
  content: '';
  position: absolute;
  left: -15px;
  bottom: 15px;
  width: 15px;
  height: 32px;
  border-left: 2px solid #444;
  border-bottom: 2px solid #444;
}

.log-sub .log-row:first-child::before {
  height: 18px;
}

.log-sub .log-row:last-child::before {
  border-bottom-left-radius: 8px;
}

.log-sub .log-row.selected {
  background: #404040;
  color: #e8eefc;
}

.log-sub .log-icon {
  width: 15px;
  height: 16px;
  margin-right: 8px;
}

.log-sub .log-icon.mcp {
  stroke-width: 15;
}

.logs-detail {
  flex: 1;
  min-width: 0;
  display: flex;
  flex-direction: column;
}

.detail-head {
  height: 33px;
  flex: none;
  display: flex;
  align-items: center;
  padding-left: 17px;
  border-bottom: 1px solid #3d3d3d;
}

.detail-icon {
  width: 14px;
  height: 14px;
  stroke-width: 14;
  margin-right: 9px;
}

.detail-name {
  font-weight: 600;
  color: #eee;
}

.detail-status {
  margin-left: 8px;
  color: #8c8c8c;
}

.detail-actions {
  margin-left: auto;
  display: flex;
  align-items: center;
}

.toggle {
  height: 24px;
  padding: 0 7px;
  margin-right: 8px;
  display: flex;
  align-items: center;
  border: 1px solid #7a4a42;
  border-radius: 4px;
  background: #5f322b;
  color: #f0f0f0;
  font-weight: 500;
}

.detail-dots {
  width: 28px;
  text-align: center;
  color: #bbb;
}

.detail-chevron {
  width: 14px;
  height: 14px;
  margin-left: 7px;
  margin-right: 12px;
  color: #ddd;
}

.panels {
  flex: 1;
  display: flex;
}

.panel {
  flex: 1;
  min-width: 0;
}

.panel-input {
  border-right: 1px solid #3d3d3d;
}

.panel-head {
  height: 34px;
  display: flex;
  align-items: center;
  justify-content: space-between;
  padding: 0 8px;
}

.panel-title {
  font-size: 11px;
  font-weight: 500;
  letter-spacing: 3.200px;
  color: #a8a8a8;
}

.panel-count {
  color: #8c8c8c;
}

.schema {
  display: flex;
  flex-direction: column;
  gap: 8px;
  padding-left: 12px;
}

.schema-row {
  height: 24px;
  display: flex;
  align-items: center;
}

.schema-row.leaf {
  padding-left: 20px;
  gap: 8px;
}

.depth-1 { margin-left: 24px; }
.depth-2 { margin-left: 48px; }

.schema-chevron {
  width: 14px;
  height: 14px;
  margin: -4px 6px 0 0;
  color: #a8a8a8;
}

.pill {
  height: 24px;
  display: flex;
  align-items: center;
  border: 1px solid #2e2e2e;
  border-radius: 4px;
  background: #1f1f1f;
}

.pill-icon {
  width: 24px;
  height: 18px;
  display: flex;
  align-items: center;
  justify-content: center;
  border-right: 1px solid #333;
  color: #7d7d7d;
}

.pill-icon .icon {
  width: 13px;
  height: 13px;
}

.pill-text {
  padding: 0 6px;
  font-weight: 500;
  color: #e2e2e2;
}

.value {
  display: flex;
  align-items: center;
  white-space: pre;
  color: #dcdcdc;
}

.blur {
  display: block;
  height: 17px;
  background-image:
    linear-gradient(rgba(23, 23, 23, 0.55) 0 50%, transparent 50%),
    repeating-linear-gradient(90deg, #4a4a4a 0 11px, #666 11px 22px, #565656 22px 33px, #3f3f3f 33px 44px);
}

.blur-a { width: 83px; }
.blur-b { width: 235px; }
.blur-c { width: 87px; }
```
